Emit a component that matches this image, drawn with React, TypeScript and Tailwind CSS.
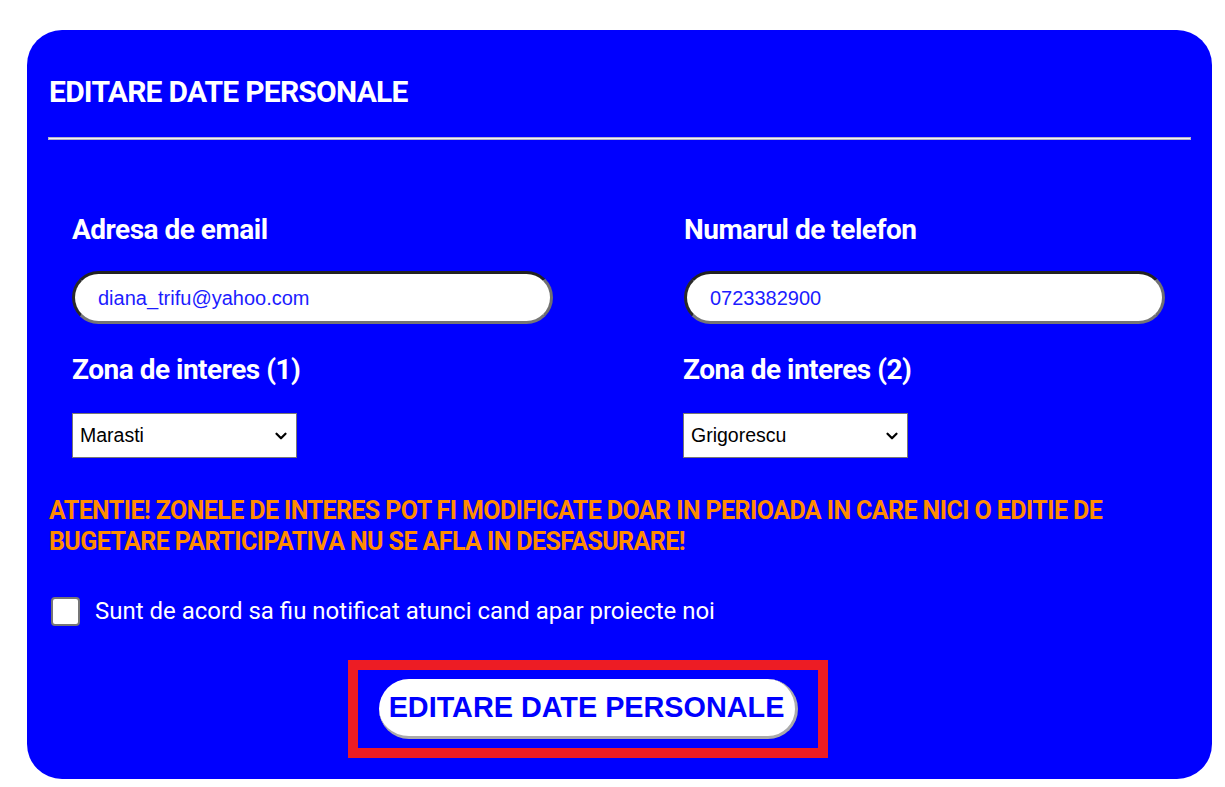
import { ChevronDown } from 'lucide-react'

const roboto = { fontFamily: 'Roboto, "Liberation Sans", sans-serif' }

function Label({ children }: { children: React.ReactNode }) {
  return (
    <div className="text-[28px] font-bold text-white tracking-[-0.5px] leading-[32px]" style={roboto}>
      {children}
    </div>
  )
}

function TextField({ value }: { value: string }) {
  return (
    <div className="mt-[25px] h-[53px] w-[481px] rounded-full bg-white border-[3px] border-t-[#222] border-l-[#2a2a2a] border-r-[#707070] border-b-[#767676] flex items-center pl-[23px]">
      <span className="text-[20px] text-[#1c1cff] font-['Liberation_Sans',Arial,sans-serif]">{value}</span>
    </div>
  )
}

function Select({ value }: { value: string }) {
  return (
    <div className="mt-[27px] h-[45px] w-[225px] bg-white border border-[#767676] flex items-center justify-between pl-[7px] pr-[6px]">
      <span className="text-[19.5px] text-black font-['Liberation_Sans',Arial,sans-serif]">{value}</span>
      <ChevronDown className="w-[18px] h-[18px] text-black" strokeWidth={3} />
    </div>
  )
}

export default function App() {
  return (
    <div className="min-h-screen bg-white pt-[30px] pl-[27px] pr-[13px] pb-[8px]">
      <div className="bg-[#0000ff] rounded-[35px] w-[1185px] h-[749px] px-[21px] pt-[44px]">
        <h1 className="text-[30px] font-bold text-white tracking-[-0.75px] leading-[36px] pl-[1px]" style={roboto}>
          EDITARE DATE PERSONALE
        </h1>

        <div className="mt-[27px] h-[3px] w-[1143px] bg-[#f0f0ff] border border-[#b4b4c8]" />

        <div className="pl-[24px] mt-[74px] grid grid-cols-[481px_481px] gap-x-[131px]">
          <div>
            <Label>Adresa de email</Label>
            <TextField value="diana_trifu@yahoo.com" />
          </div>
          <div>
            <Label>Numarul de telefon</Label>
            <TextField value="0723382900" />
          </div>
          <div className="mt-[30px]">
            <Label>Zona de interes (1)</Label>
            <Select value="Marasti" />
          </div>
          <div className="mt-[30px] -ml-[1px]">
            <Label>Zona de interes (2)</Label>
            <Select value="Grigorescu" />
          </div>
        </div>

        <p
          className="mt-[37px] pl-[1px] text-[25px] font-bold text-[#ff8c00] uppercase tracking-[-0.58px] leading-[31px]"
          style={roboto}
        >
          ATENTIE! ZONELE DE INTERES POT FI MODIFICATE DOAR IN PERIOADA IN CARE NICI O EDITIE DE
          <br />
          BUGETARE PARTICIPATIVA NU SE AFLA IN DESFASURARE!
        </p>

        <div className="mt-[36px] flex items-center gap-[15px] pl-[3px]">
          <div className="w-[29px] h-[29px] rounded-[4px] bg-white border-2 border-[#767676]" />
          <span className="text-[24px] text-white" style={roboto}>
            Sunt de acord sa fiu notificat atunci cand apar proiecte noi
          </span>
        </div>

        <div className="mt-[31px] ml-[300px] w-[480px] h-[98px] border-[10px] border-[#ed1c24] flex items-center justify-center">
          <button className="h-[60px] w-[419px] rounded-full bg-white border-r-[3px] border-b-[3px] border-[#aaaaaa] text-[#0000ff] text-[28.8px] font-bold font-['Liberation_Sans',Arial,sans-serif] leading-none">
            EDITARE DATE PERSONALE
          </button>
        </div>
      </div>
    </div>
  )
}
